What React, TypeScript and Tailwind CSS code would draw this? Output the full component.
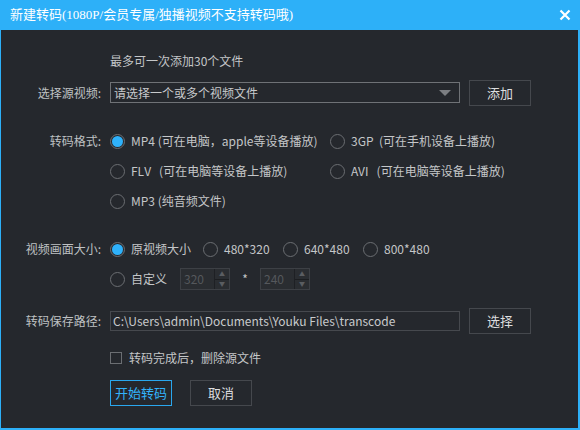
import type { ReactNode } from "react";

const FONT = "font-['Noto_Sans_CJK_SC','Noto_Sans',sans-serif]";

function Radio({ checked = false }: { checked?: boolean }) {
  return (
    <span className="flex h-[15px] w-[15px] shrink-0 items-center justify-center rounded-full border border-[#6b6e72]">
      {checked ? <span className="h-[11px] w-[11px] rounded-full bg-[#2fb2fb]" /> : null}
    </span>
  );
}

function Option({
  checked,
  className = "",
  children,
}: {
  checked?: boolean;
  className?: string;
  children: ReactNode;
}) {
  return (
    <label className={`flex items-center gap-[6px] text-[12px] text-[#c4c6c8] ${className}`}>
      <Radio checked={checked} />
      <span className="whitespace-nowrap">{children}</span>
    </label>
  );
}

function Label({ children }: { children: ReactNode }) {
  return (
    <span className="w-[100px] shrink-0 whitespace-nowrap text-right text-[12px] text-[#bfc1c3]">
      {children}
    </span>
  );
}

function Button({ children, primary = false }: { children: ReactNode; primary?: boolean }) {
  return (
    <button
      className={
        primary
          ? "h-[26px] w-[62px] border border-[#2aa7ee] text-[13px] text-[#33b3fb]"
          : "h-[26px] w-[62px] border border-[#45484d] text-[13px] text-[#dcdddf]"
      }
    >
      {children}
    </button>
  );
}

function SpinBox({ value }: { value: string }) {
  return (
    <div className="flex h-[22px] w-[50px] border border-[#3d4045] bg-[#2a2d31]">
      <span className="flex flex-1 items-center pl-[3px] text-[12px] text-[#55585c]">{value}</span>
      <div className="flex w-[15px] flex-col border-l border-[#1e2024]">
        <span className="flex flex-1 items-center justify-center border-b border-[#1c1e21] text-[6px] leading-none text-[#5a5d61]">
          ▲
        </span>
        <span className="flex flex-1 items-center justify-center text-[6px] leading-none text-[#5a5d61]">
          ▼
        </span>
      </div>
    </div>
  );
}

export default function App() {
  return (
    <div className={`flex h-[430px] w-[580px] flex-col bg-[#2db0f8] ${FONT}`}>
      <div className="flex h-[30px] shrink-0 items-center justify-between pl-[10px] pr-[8px]">
        <span className="font-['Liberation_Serif','Noto_Sans_CJK_SC',serif] text-[13px] text-white">
          新建转码(1080P/会员专属/独播视频不支持转码哦)
        </span>
        <svg width="12" height="12" viewBox="0 0 12 12" className="mr-[1px]">
          <path d="M1.5 1.5 L10.5 10.5 M10.5 1.5 L1.5 10.5" stroke="#fff" strokeWidth="2.2" />
        </svg>
      </div>
      <div className="mb-[2px] ml-[1px] mr-[2px] flex flex-1 flex-col bg-[#25282d]">
        <div className="mt-[22px] flex h-[18px] items-center pl-[109px] text-[12px] text-[#c4c6c8]">
          最多可一次添加30个文件
        </div>

        <div className="mt-[10px] flex h-[25px] items-center gap-[9px]">
          <Label>选择源视频:</Label>
          <div className="flex h-[21px] w-[350px] items-center justify-between border border-[#6f7276] pl-[3px] pr-[8px]">
            <span className="text-[12px] text-[#c8cacc]">请选择一个或多个视频文件</span>
            <svg width="12" height="6" viewBox="0 0 12 6">
              <path d="M0 0 L12 0 L6 6 Z" fill="#7b7e82" />
            </svg>
          </div>
          <Button>添加</Button>
        </div>

        <div className="mt-[21px] flex">
          <div className="flex h-[30px] items-center">
            <Label>转码格式:</Label>
          </div>
          <div className="ml-[9px] grid grid-cols-[220px_1fr] grid-rows-[30px_30px_30px]">
            <Option checked>MP4 (可在电脑，apple等设备播放)</Option>
            <Option>3GP&nbsp; (可在手机设备上播放)</Option>
            <Option>FLV&nbsp;&nbsp; (可在电脑等设备上播放)</Option>
            <Option>AVI&nbsp;&nbsp; (可在电脑等设备上播放)</Option>
            <Option>MP3 (纯音频文件)</Option>
          </div>
        </div>

        <div className="mt-[18px] flex">
          <div className="flex h-[30px] items-center">
            <Label>视频画面大小:</Label>
          </div>
          <div className="ml-[9px] flex flex-col">
            <div className="flex h-[30px] items-center">
              <Option checked className="w-[93px]">原视频大小</Option>
              <Option className="w-[80px]">480*320</Option>
              <Option className="w-[80px]">640*480</Option>
              <Option>800*480</Option>
            </div>
            <div className="flex h-[30px] items-center">
              <Option className="w-[70px]">自定义</Option>
              <SpinBox value="320" />
              <span className="w-[30px] text-center text-[12px] text-[#c4c6c8]">*</span>
              <SpinBox value="240" />
            </div>
          </div>
        </div>

        <div className="mt-[14px] flex h-[25px] items-center gap-[9px]">
          <Label>转码保存路径:</Label>
          <div className="flex h-[20px] w-[350px] items-center border border-[#46494e] pl-[2px] text-[12px] text-[#c8cacc]">
            C:\Users\admin\Documents\Youku Files\transcode
          </div>
          <Button>选择</Button>
        </div>

        <div className="mt-[15px] flex h-[20px] items-center gap-[7px] pl-[109px]">
          <span className="h-[12px] w-[12px] border border-[#6b6e72]" />
          <span className="text-[12px] text-[#c4c6c8]">转码完成后，删除源文件</span>
        </div>

        <div className="mt-[12px] flex gap-[18px] pl-[109px]">
          <Button primary>开始转码</Button>
          <Button>取消</Button>
        </div>
      </div>
    </div>
  );
}
